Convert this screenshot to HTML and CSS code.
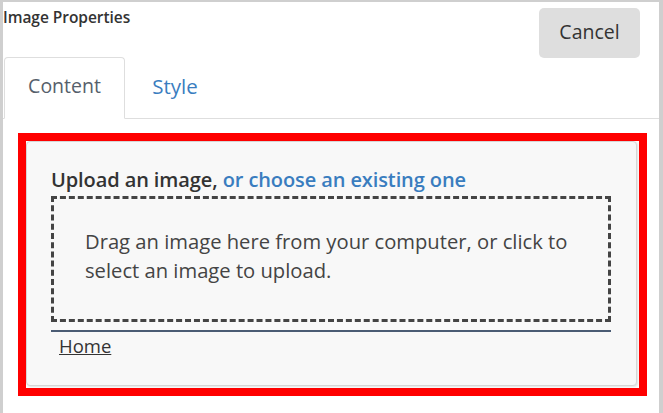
FILE: index.html
```html
<!DOCTYPE html>
<html lang="en">
<head>
<meta charset="utf-8">
<title>Image Properties</title>
<link rel="stylesheet" href="styles.css">
</head>
<body>
<div class="frame">
  <header class="header">
    <h1 class="title">Image Properties</h1>
    <button class="cancel" type="button">Cancel</button>
  </header>
  <nav class="tabs">
    <a class="tab active">Content</a>
    <a class="tab">Style</a>
  </nav>
  <div class="highlight">
    <section class="panel">
      <h2 class="upload-heading">Upload an image, <a class="link">or choose an existing one</a></h2>
      <div class="dropzone">
        <p>Drag an image here from your computer, or click to select an image to upload.</p>
      </div>
      <div class="breadcrumb"><a class="crumb">Home</a></div>
    </section>
  </div>
</div>
</body>
</html>
```

FILE: styles.css
```css
* { box-sizing: border-box; }
html, body { margin: 0; padding: 0; background: #fff; }
body {
  font-family: "Open Sans", "Noto Sans", sans-serif;
  color: #333;
  width: 663px;
  height: 413px;
  overflow: hidden;
}
.frame {
  border-left: 3px solid #cfcfcf;
  border-top: 2px solid #cfcfcf;
  border-right: 4px solid #cfcfcf;
  height: 413px;
  display: flex;
  flex-direction: column;
}
.header {
  display: flex;
  justify-content: space-between;
  align-items: flex-start;
  height: 55px;
  padding-right: 19px;
}
.title {
  margin: 0;
  font-size: 15.5px;
  font-weight: 600;
  line-height: 20px;
  padding-top: 5px;
  color: #333;
  letter-spacing: -0.05px;
}
.cancel {
  margin-top: 6px;
  width: 101px;
  height: 50px;
  border: none;
  border-radius: 5px;
  background: #dedede;
  color: #333;
  font-family: inherit;
  font-size: 19.5px;
  line-height: 24px;
  padding: 0 0 3px;
}
.tabs {
  display: flex;
  height: 62px;
  border-bottom: 1px solid #dedede;
  padding-left: 1px;
}
.tab {
  width: 121px;
  height: 62px;
  display: flex;
  align-items: center;
  justify-content: center;
  font-size: 19.5px;
  line-height: 24px;
  padding-bottom: 4px;
  color: #3a7dbf;
  border: 1px solid transparent;
  border-radius: 4px 4px 0 0;
}
.tab + .tab { width: 100px; font-size: 20.5px; }
.tab.active {
  color: #56606b;
  border-color: #dedede;
  border-bottom-color: #fff;
  background: #fff;
  height: 62px;
  margin-bottom: -1px;
}
.highlight {
  margin: 14px 12px 0 15px;
  height: 263px;
  border: 8px solid #f00;
  padding: 0 2px 2px 0;
  background: #fff;
  display: flex;
}
.panel {
  flex: 1;
  background: #f8f8f8;
  border: 1px solid #d6d6d6;
  border-radius: 4px;
  box-shadow: 1px 1px 2px rgba(0,0,0,0.12);
  padding: 26px 25px 0 24px;
  display: flex;
  flex-direction: column;
}
.upload-heading {
  margin: 0;
  font-size: 20px;
  font-weight: 600;
  line-height: 24px;
  color: #333;
  letter-spacing: -0.1px;
}
.link { color: #3a7dbf; }
.dropzone {
  margin-top: 4px;
  height: 126px;
  border: 3px dashed #444;
  padding: 28px 36px 0 31px;
}
.dropzone p {
  margin: 0;
  font-size: 20.2px;
  line-height: 29px;
  color: #444;
}
.breadcrumb {
  margin-top: 8px;
  border-top: 2px solid #4b5c74;
  padding: 3px 0 0 8px;
}
.crumb {
  font-size: 18.5px;
  line-height: 22px;
  color: #333;
  text-decoration: underline;
}
```
